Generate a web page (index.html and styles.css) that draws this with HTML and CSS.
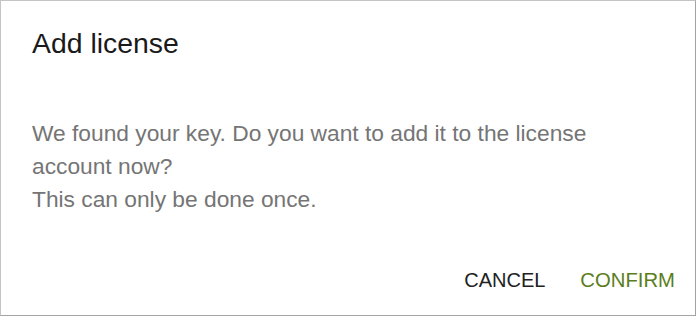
FILE: index.html
```html
<!DOCTYPE html>
<html lang="en">
<head>
<meta charset="utf-8">
<title>Add license</title>
<link rel="stylesheet" href="styles.css">
</head>
<body>
<div class="dialog">
  <h2 class="dialog-title">Add license</h2>
  <div class="dialog-content">
    <p class="dialog-text">We found your key. Do you want to add it to the license account now?<br>This can only be done once.</p>
  </div>
  <div class="dialog-actions">
    <button class="btn btn-cancel">CANCEL</button>
    <button class="btn btn-confirm">CONFIRM</button>
  </div>
</div>
</body>
</html>
```
FILE: styles.css
```css
html, body {
  margin: 0;
  padding: 0;
  background: #ffffff;
}
body {
  font-family: "Liberation Sans", Arial, sans-serif;
}
.dialog {
  box-sizing: border-box;
  width: 696px;
  height: 316px;
  border: 1px solid #c4c4c4;
  border-right-color: #a3a3a3;
  border-bottom-color: #a3a3a3;
  background: #ffffff;
  display: flex;
  flex-direction: column;
}
.dialog-title {
  margin: 26px 0 0 31px;
  font-size: 28.4px;
  line-height: 32px;
  font-weight: normal;
  color: #1a1a1a;
}
.dialog-content {
  margin-top: 58px;
  padding: 0 28px 0 31px;
}
.dialog-text {
  margin: 0;
  font-size: 22.75px;
  line-height: 33px;
  color: #757575;
}
.dialog-actions {
  margin-top: 46px;
  padding-right: 12px;
  display: flex;
  justify-content: flex-end;
  gap: 19px;
}
.btn {
  background: none;
  border: none;
  margin: 0;
  padding: 0 8px;
  font-family: "Liberation Sans", Arial, sans-serif;
  font-size: 20px;
  line-height: 36px;
  cursor: pointer;
}
.btn-cancel {
  color: #212121;
}
.btn-confirm {
  color: #5b7d1d;
  font-size: 20.3px;
}
```
